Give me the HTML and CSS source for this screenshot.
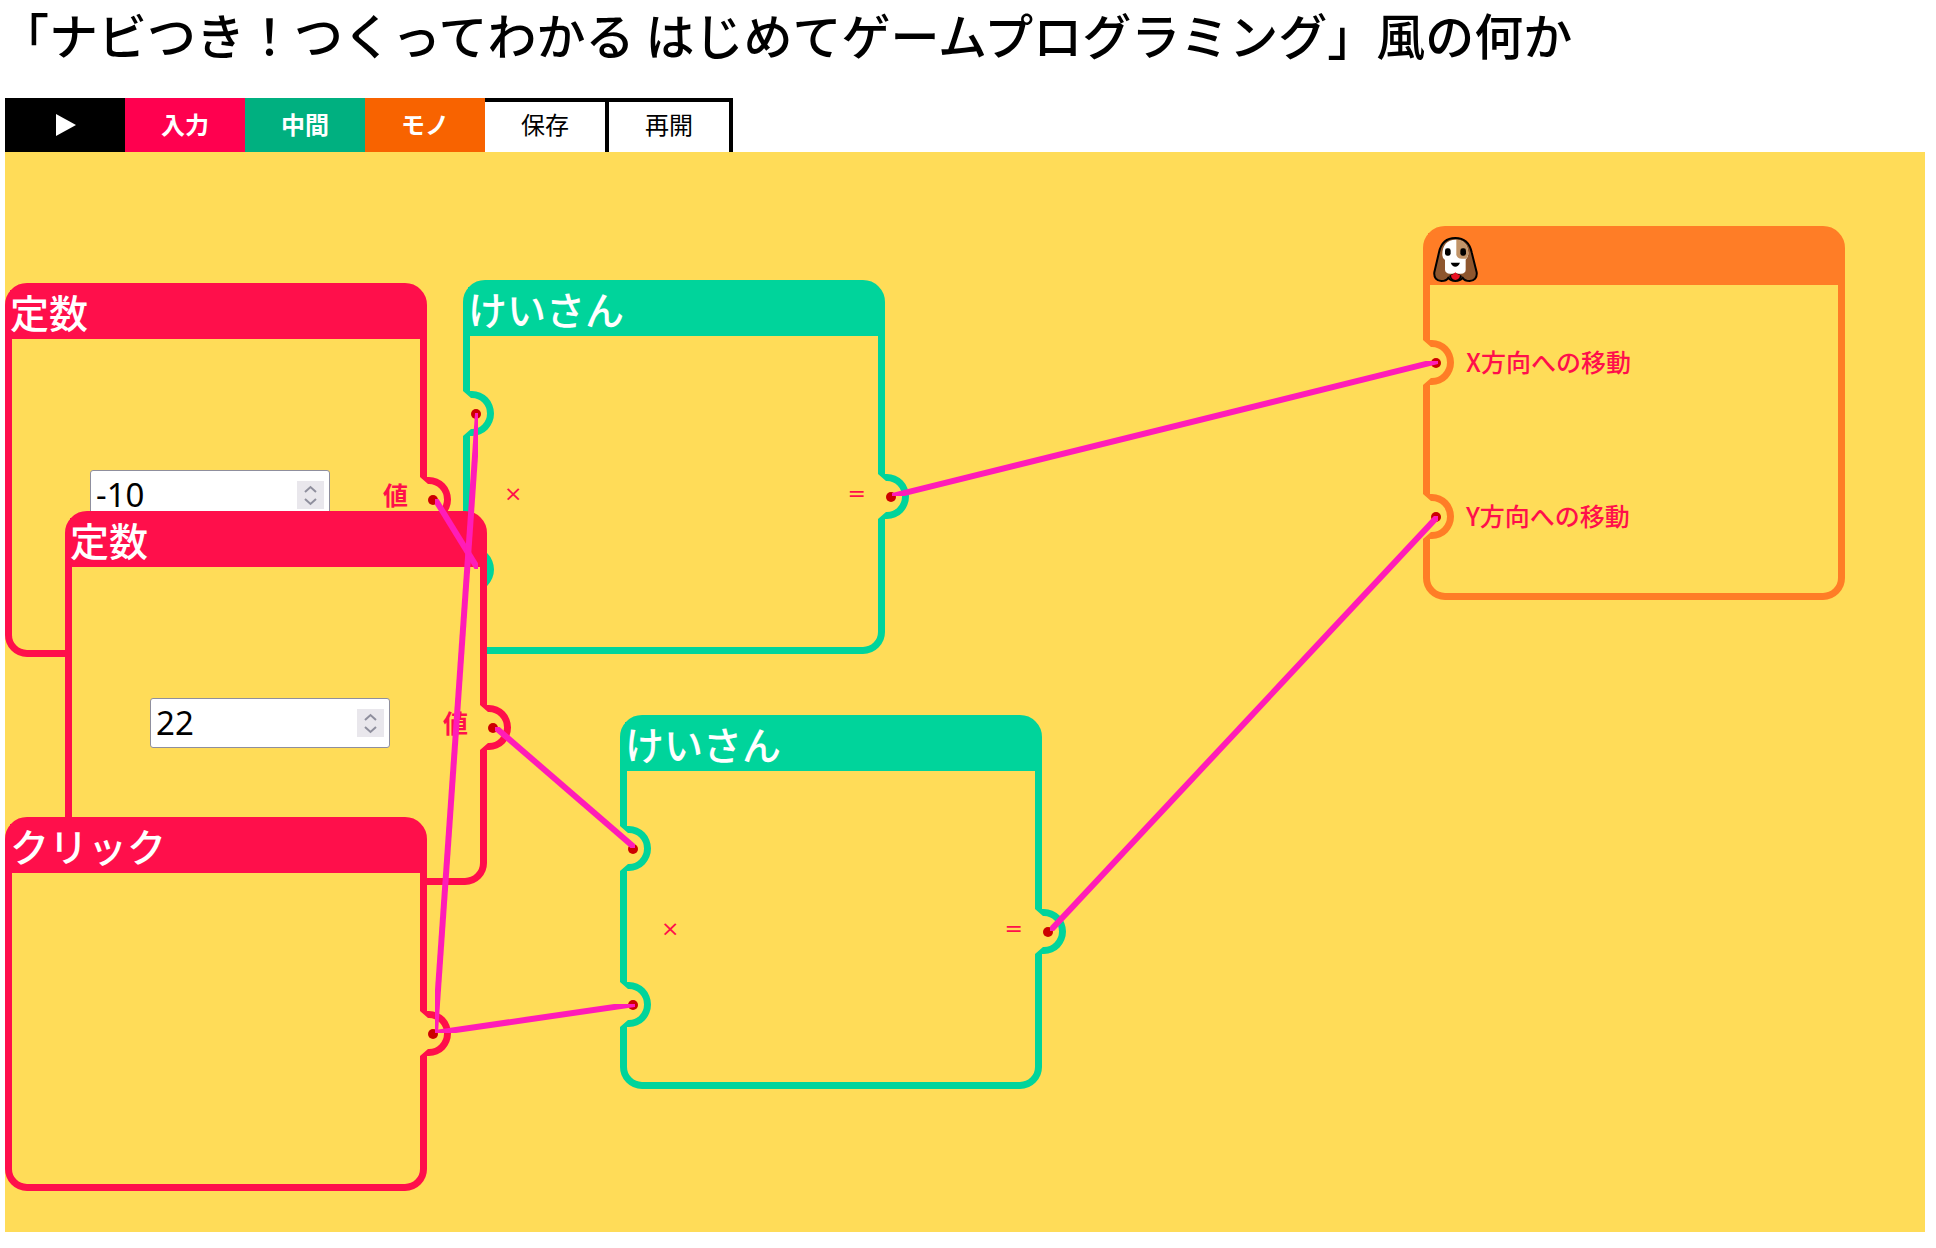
FILE: index.html
```html
<!DOCTYPE html>
<html lang="ja">
<head>
<meta charset="utf-8">
<title>はじめてゲームプログラミング風の何か</title>
<link rel="stylesheet" href="styles.css">
</head>
<body>
<svg class="defs" aria-hidden="true">
  <symbol id="port" viewBox="0 0 31 45">
    <rect class="port-gap" width="7" height="45"/>
    <path class="port-rim" d="M0 0H9A22 22.500 0 0 1 9 45H0L8 38H9A15 15.500 0 0 0 9 7H8Z"/>
    <circle class="port-dot" cx="13" cy="23" r="5"/>
  </symbol>
  <symbol id="spin" viewBox="0 0 27 28">
    <path class="spin-arrow" d="M8 11L13.500 6L19 11M8 18L13.500 23L19 18"/>
  </symbol>
</svg>

<h1 class="page-title">「ナビつき！つくってわかる はじめてゲームプログラミング」風の何か</h1>

<nav class="toolbar">
  <button class="tool tool-play" type="button" aria-label="実行"><svg width="22" height="22" viewBox="0 0 22 22"><path d="M2 0L22 11L2 22Z" fill="#fff"/></svg></button>
  <button class="tool tool-input" type="button">入力</button>
  <button class="tool tool-middle" type="button">中間</button>
  <button class="tool tool-object" type="button">モノ</button>
  <button class="tool tool-file" type="button">保存</button>
  <button class="tool tool-file" type="button">再開</button>
</nav>

<main class="board">
  <section class="node node-in at-const-a">
    <h2 class="node-title">定数</h2>
    <div class="node-body">
      <div class="number"><input class="number-box" id="const-a" type="number" value="-10"><svg class="spin"><use href="#spin"/></svg></div>
      <div class="output"><label class="name" for="const-a">値</label><svg class="port"><use href="#port"/></svg></div>
    </div>
  </section>

  <section class="node node-mid at-calc-a">
    <h2 class="node-title">けいさん</h2>
    <div class="node-body">
      <div class="inputs">
        <div class="slot"><svg class="port"><use href="#port"/></svg></div>
        <div class="slot"><svg class="port"><use href="#port"/></svg></div>
      </div>
      <span class="sign">×</span>
      <div class="output"><span class="sign">=</span><svg class="port"><use href="#port"/></svg></div>
    </div>
  </section>

  <section class="node node-in at-const-b">
    <h2 class="node-title">定数</h2>
    <div class="node-body">
      <div class="number"><input class="number-box" id="const-b" type="number" value="22"><svg class="spin"><use href="#spin"/></svg></div>
      <div class="output"><label class="name" for="const-b">値</label><svg class="port"><use href="#port"/></svg></div>
    </div>
  </section>

  <section class="node node-in at-click">
    <h2 class="node-title">クリック</h2>
    <div class="node-body">
      <div class="output"><svg class="port"><use href="#port"/></svg></div>
    </div>
  </section>

  <section class="node node-mid at-calc-b">
    <h2 class="node-title">けいさん</h2>
    <div class="node-body">
      <div class="inputs">
        <div class="slot"><svg class="port"><use href="#port"/></svg></div>
        <div class="slot"><svg class="port"><use href="#port"/></svg></div>
      </div>
      <span class="sign">×</span>
      <div class="output"><span class="sign">=</span><svg class="port"><use href="#port"/></svg></div>
    </div>
  </section>

  <section class="node node-obj at-dog">
    <h2 class="node-title node-title-icon">
      <svg width="45" height="45" viewBox="0 0 135 135" role="img" aria-label="犬">
        <path d="M67 3C93 3 110 18 116 46L131 106C133 122 124 132 110 132C101 132 93 129 89 122C84 129 77 132 67 132C58 132 51 129 46 122C42 129 34 132 25 132C11 132 2 122 4 106L18 46C24 18 41 3 67 3Z" fill="#8e562e" stroke="#000" stroke-width="6" stroke-linejoin="round"/>
        <path d="M67 8C43 8 27 25 28 55Q28 64 36 69V98Q37 109 51 110H84Q98 109 98 98V68Q106 62 106 48C105 24 92 8 67 8Z" fill="#fff"/>
        <path d="M70 8V54Q73 65 86 65H99Q106 60 106 48C105 24 92 8 70 8Z" fill="#c19468"/>
        <path d="M48 117Q67 100 87 117L80 129H56Z" fill="#000"/>
        <path d="M54 115Q60 114 67 106Q74 114 81 115Q80 128 67 129Q55 128 54 115Z" fill="#e81224"/>
        <rect x="36" y="34" width="17" height="22" rx="7" fill="#000"/>
        <rect x="82" y="34" width="17" height="22" rx="7" fill="#000"/>
        <path d="M53 77H81Q76 89 67 89Q58 89 53 77Z" fill="#000"/>
      </svg>
    </h2>
    <div class="node-body">
      <div class="inputs">
        <div class="slot"><svg class="port"><use href="#port"/></svg><span class="name">X方向への移動</span></div>
        <div class="slot"><svg class="port"><use href="#port"/></svg><span class="name">Y方向への移動</span></div>
      </div>
    </div>
  </section>

  <svg class="wires" aria-hidden="true">
    <svg x="430" y="347" width="43" height="70"><line x2="43" y2="70"/></svg>
    <svg x="430" y="261" width="43" height="620"><line x1="43" y2="620"/></svg>
    <svg x="430" y="852" width="200" height="29"><line x1="200" y2="29"/></svg>
    <svg x="490" y="575" width="140" height="121"><line x2="140" y2="121"/></svg>
    <svg x="887" y="209" width="546" height="135"><line x1="546" y2="135"/></svg>
    <svg x="1045" y="364" width="388" height="415"><line x1="388" y2="415"/></svg>
  </svg>
</main>
</body>
</html>
```
FILE: styles.css
```css
* {
  box-sizing: border-box;
}

body {
  margin: 5px 11px 5px 5px;
  background: #fff;
  color: #000;
  font-family: "Noto Sans", "Noto Sans CJK JP", sans-serif;
}

.defs {
  position: absolute;
  width: 0;
  height: 0;
}

.page-title {
  margin: 0 0 35px -5px;
  font-family: "Noto Sans CJK JP", sans-serif;
  font-size: 49px;
  line-height: 58px;
  font-weight: 500;
}

/* Toolbar */

.toolbar {
  display: flex;
}

.tool {
  width: 120px;
  height: 54px;
  padding: 0 0 2px;
  border: 0;
  color: #fff;
  font-family: "Noto Sans CJK JP", sans-serif;
  font-size: 24px;
  line-height: 36px;
  font-weight: 700;
}

.tool svg {
  display: block;
  margin: 0 auto;
}

.tool-play {
  padding: 0;
  background: #000;
}

.tool-input {
  background: #ff004f;
}

.tool-middle {
  background: #00b080;
}

.tool-object {
  background: #f86300;
}

.tool-file {
  width: 124px;
  padding-bottom: 6px;
  border-top: 4px solid #000;
  border-right: 4px solid #000;
  background: #fff;
  color: #000;
  font-weight: 400;
}

/* Board and nodes */

.board {
  position: relative;
  aspect-ratio: 16 / 9;
  background: #ffdc58;
}

.node {
  position: absolute;
  display: flex;
  flex-direction: column;
  width: 422px;
  height: 374px;
  border: 7px solid var(--tone);
  border-radius: 22px;
  background: #ffdc58;
}

.node-in {
  --tone: #ff0f4b;
}

.node-mid {
  --tone: #00d49b;
}

.node-obj {
  --tone: #ff7d26;
}

.at-const-a {
  left: 0;
  top: 131px;
}

.at-calc-a {
  left: 458px;
  top: 128px;
}

.at-const-b {
  left: 60px;
  top: 359px;
}

.at-click {
  left: 0;
  top: 665px;
}

.at-calc-b {
  left: 615px;
  top: 563px;
}

.at-dog {
  left: 1418px;
  top: 74px;
}

.node-title {
  margin: 0 0 0 -2px;
  padding-bottom: 7px;
  background: var(--tone);
  color: #fff;
  font-family: "Noto Sans CJK JP", sans-serif;
  font-size: 39px;
  line-height: 42px;
  font-weight: 500;
}

.node-title-icon {
  padding: 4px 5px 3px;
}

.node-title-icon svg {
  display: block;
}

.node-body {
  flex: 1;
  display: flex;
  align-items: center;
}

.inputs {
  align-self: stretch;
  display: flex;
  flex-direction: column;
  margin-left: -7px;
}

.slot {
  flex: 1;
  display: flex;
  align-items: center;
  gap: 12px;
}

.inputs + .sign {
  margin-left: 10px;
}

.output {
  display: flex;
  align-items: center;
  gap: 12px;
  margin-left: auto;
}

.output .port {
  margin: 10px -31px 0 0;
}

.port {
  display: block;
  width: 31px;
  height: 45px;
}

.port-gap {
  fill: #ffdc58;
}

.port-rim {
  fill: var(--tone);
}

.port-dot {
  fill: #c00;
}

.name {
  padding-bottom: 2px;
  color: #ff0f4b;
  font-family: "Noto Sans CJK JP", sans-serif;
  font-size: 25px;
  line-height: 36px;
  font-weight: 500;
}

.output .name {
  font-weight: 700;
}

.sign {
  padding-top: 4px;
  color: #ff0f4b;
  font-family: "DejaVu Sans", sans-serif;
  font-size: 22px;
  line-height: 36px;
}

/* Number field */

.number {
  position: relative;
  width: 240px;
  margin-left: 78px;
}

.number-box {
  display: block;
  width: 100%;
  height: 50px;
  padding: 0 36px 0 5px;
  border: 1px solid #8f8f9d;
  border-radius: 3px;
  background: #fff;
  color: #000;
  font-family: "Noto Sans", sans-serif;
  font-size: 33px;
  appearance: textfield;
}

.number-box::-webkit-inner-spin-button,
.number-box::-webkit-outer-spin-button {
  appearance: none;
  margin: 0;
}

.spin {
  position: absolute;
  top: 11px;
  right: 6px;
  width: 27px;
  height: 28px;
  background: #e9e7ec;
}

.spin-arrow {
  fill: none;
  stroke: #8f8f9d;
  stroke-width: 2;
}

/* Wires lie over every node */

.wires {
  position: absolute;
  inset: 0;
  width: 100%;
  height: 100%;
  pointer-events: none;
}

.wires svg {
  overflow: hidden;
}

.wires line {
  stroke: #ff1cb8;
  stroke-width: 6;
}
```
